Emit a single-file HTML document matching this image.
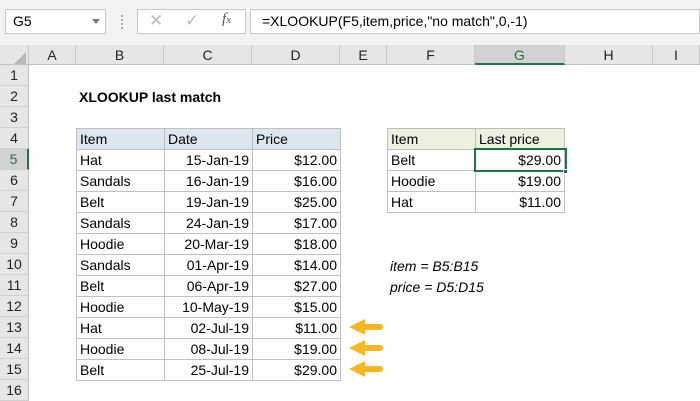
<!DOCTYPE html>
<html><head><meta charset="utf-8"><style>
*{margin:0;padding:0;box-sizing:border-box}
body{width:700px;height:400px;overflow:hidden;background:#fff;font-family:"Liberation Sans",sans-serif;position:relative;color:#000}
div{position:absolute}
.top{left:0;top:0;width:700px;height:45px;background:#f3f3f3}
.hdr{top:45px;height:20px;background:#e6e6e6;border-right:1px solid #c8c8c8;border-bottom:1px solid #c0c0c0;font-size:14px;text-align:center;line-height:20px;color:#222}
.rh{left:0;width:29px;height:21px;background:#e6e6e6;border-bottom:1px solid #d0d0d0;border-right:1px solid #c0c0c0;font-size:14px;text-align:center;line-height:21px;color:#222}
.c{height:22px;border:1px solid #c0c0c0;font-size:14px;line-height:21px;padding:0 3px;white-space:nowrap}
.r{text-align:right}
.arrow{position:absolute;left:349px;width:34px;height:16px}
</style></head><body>
<div class="top"></div>
<div style="left:5px;top:9px;width:101px;height:25px;background:#fff;border:1px solid #c6c6c6;font-size:14px;line-height:23px;padding-left:7px">G5</div>
<div style="left:92px;top:19px;width:0;height:0;border-left:4px solid transparent;border-right:4px solid transparent;border-top:5px solid #777"></div>
<div style="left:121px;top:15px;width:2px;height:14px;border-left:2px dotted #aaa"></div>
<div style="left:137px;top:9px;width:109px;height:25px;background:#fff;border:1px solid #c6c6c6"></div>
<div style="left:149px;top:11px;font-size:17px;color:#bbb">✕</div>
<div style="left:185px;top:11px;font-size:17px;color:#bbb">✓</div>
<div style="left:222px;top:11px;font-size:15px;color:#555;font-style:italic;font-family:'Liberation Serif',serif">f<span style="font-size:11px">x</span></div>
<div style="left:250px;top:9px;width:450px;height:25px;background:#fff;border:1px solid #c6c6c6;font-size:14px;line-height:23px;padding-left:11px">=XLOOKUP(F5,item,price,"no match",0,-1)</div>

<div class="hdr" style="left:0;width:29px"></div>
<div style="left:14px;top:52px;width:0;height:0;border-left:12px solid transparent;border-bottom:12px solid #b8b8b8"></div>
<div class="hdr" style="left:29px;width:47px">A</div>
<div class="hdr" style="left:76px;width:88px">B</div>
<div class="hdr" style="left:164px;width:88px">C</div>
<div class="hdr" style="left:252px;width:88px">D</div>
<div class="hdr" style="left:340px;width:47px">E</div>
<div class="hdr" style="left:387px;width:88px">F</div>
<div class="hdr" style="left:475px;width:90px;background:#d2d2d2;border-bottom:2px solid #217346;color:#217346">G</div>
<div class="hdr" style="left:565px;width:88px">H</div>
<div class="hdr" style="left:653px;width:47px">I</div>

<div class="rh" style="top:65px">1</div>
<div class="rh" style="top:86px">2</div>
<div class="rh" style="top:107px">3</div>
<div class="rh" style="top:128px">4</div>
<div class="rh" style="top:149px;background:#d2d2d2;border-right:2px solid #217346;color:#217346">5</div>
<div class="rh" style="top:170px">6</div>
<div class="rh" style="top:191px">7</div>
<div class="rh" style="top:212px">8</div>
<div class="rh" style="top:233px">9</div>
<div class="rh" style="top:254px">10</div>
<div class="rh" style="top:275px">11</div>
<div class="rh" style="top:296px">12</div>
<div class="rh" style="top:317px">13</div>
<div class="rh" style="top:338px">14</div>
<div class="rh" style="top:359px">15</div>
<div class="rh" style="top:380px">16</div>

<div style="left:79px;top:87px;font-size:14px;font-weight:bold;line-height:21px">XLOOKUP last match</div>

<div class="c" style="left:76px;top:128px;width:89px;background:#dce6f1">Item</div>
<div class="c" style="left:164px;top:128px;width:89px;background:#dce6f1">Date</div>
<div class="c" style="left:252px;top:128px;width:89px;background:#dce6f1">Price</div>

<div class="c" style="left:76px;top:149px;width:89px">Hat</div><div class="c r" style="left:164px;top:149px;width:89px">15-Jan-19</div><div class="c r" style="left:252px;top:149px;width:89px">$12.00</div>
<div class="c" style="left:76px;top:170px;width:89px">Sandals</div><div class="c r" style="left:164px;top:170px;width:89px">16-Jan-19</div><div class="c r" style="left:252px;top:170px;width:89px">$16.00</div>
<div class="c" style="left:76px;top:191px;width:89px">Belt</div><div class="c r" style="left:164px;top:191px;width:89px">19-Jan-19</div><div class="c r" style="left:252px;top:191px;width:89px">$25.00</div>
<div class="c" style="left:76px;top:212px;width:89px">Sandals</div><div class="c r" style="left:164px;top:212px;width:89px">24-Jan-19</div><div class="c r" style="left:252px;top:212px;width:89px">$17.00</div>
<div class="c" style="left:76px;top:233px;width:89px">Hoodie</div><div class="c r" style="left:164px;top:233px;width:89px">20-Mar-19</div><div class="c r" style="left:252px;top:233px;width:89px">$18.00</div>
<div class="c" style="left:76px;top:254px;width:89px">Sandals</div><div class="c r" style="left:164px;top:254px;width:89px">01-Apr-19</div><div class="c r" style="left:252px;top:254px;width:89px">$14.00</div>
<div class="c" style="left:76px;top:275px;width:89px">Belt</div><div class="c r" style="left:164px;top:275px;width:89px">06-Apr-19</div><div class="c r" style="left:252px;top:275px;width:89px">$27.00</div>
<div class="c" style="left:76px;top:296px;width:89px">Hoodie</div><div class="c r" style="left:164px;top:296px;width:89px">10-May-19</div><div class="c r" style="left:252px;top:296px;width:89px">$15.00</div>
<div class="c" style="left:76px;top:317px;width:89px">Hat</div><div class="c r" style="left:164px;top:317px;width:89px">02-Jul-19</div><div class="c r" style="left:252px;top:317px;width:89px">$11.00</div>
<div class="c" style="left:76px;top:338px;width:89px">Hoodie</div><div class="c r" style="left:164px;top:338px;width:89px">08-Jul-19</div><div class="c r" style="left:252px;top:338px;width:89px">$19.00</div>
<div class="c" style="left:76px;top:359px;width:89px">Belt</div><div class="c r" style="left:164px;top:359px;width:89px">25-Jul-19</div><div class="c r" style="left:252px;top:359px;width:89px">$29.00</div>

<div class="c" style="left:387px;top:128px;width:89px;background:#ebf1de">Item</div>
<div class="c" style="left:475px;top:128px;width:90px;background:#ebf1de">Last price</div>
<div class="c" style="left:387px;top:149px;width:89px">Belt</div><div class="c r" style="left:475px;top:149px;width:90px">$29.00</div>
<div class="c" style="left:387px;top:170px;width:89px">Hoodie</div><div class="c r" style="left:475px;top:170px;width:90px">$19.00</div>
<div class="c" style="left:387px;top:191px;width:89px">Hat</div><div class="c r" style="left:475px;top:191px;width:90px">$11.00</div>
<div style="left:474px;top:148px;width:93px;height:24px;border:2px solid #217346"></div>
<div style="left:563px;top:169px;width:5px;height:5px;background:#217346;border:1px solid #fff"></div>

<div style="left:390px;top:258px;font-size:14px;font-style:italic">item = B5:B15</div>
<div style="left:390px;top:279px;font-size:14px;font-style:italic">price = D5:D15</div>

<svg class="arrow" style="top:319px" viewBox="0 0 34 16"><path d="M0 8 L16 0 L16 5 L31 5 A3 3 0 0 1 31 11 L16 11 L16 16 Z" fill="#f4b825"/></svg>
<svg class="arrow" style="top:340px" viewBox="0 0 34 16"><path d="M0 8 L16 0 L16 5 L31 5 A3 3 0 0 1 31 11 L16 11 L16 16 Z" fill="#f4b825"/></svg>
<svg class="arrow" style="top:361px" viewBox="0 0 34 16"><path d="M0 8 L16 0 L16 5 L31 5 A3 3 0 0 1 31 11 L16 11 L16 16 Z" fill="#f4b825"/></svg>
</body></html>
